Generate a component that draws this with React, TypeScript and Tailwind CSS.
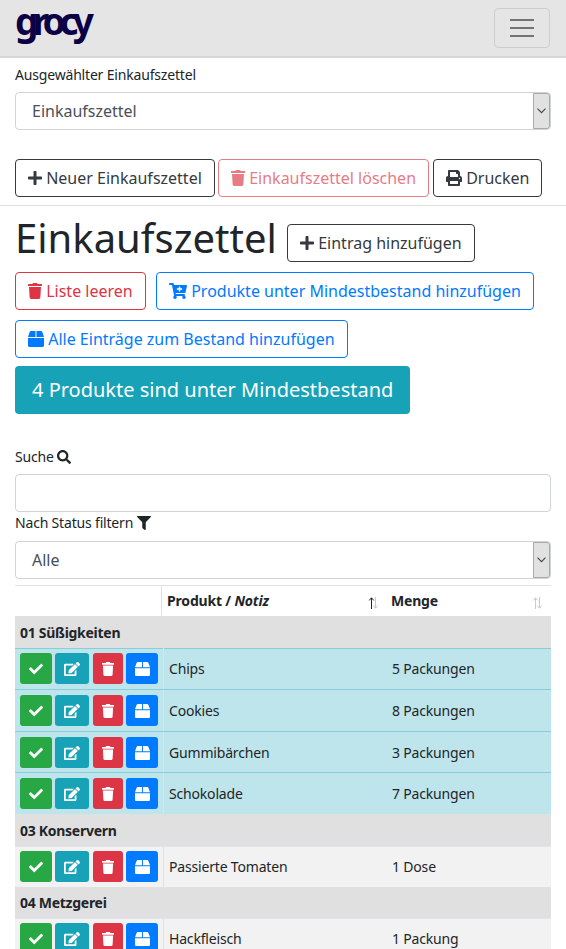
import type { ReactNode } from "react";
import type { IconType } from "react-icons";
import { FaBox, FaCartPlus, FaCheck, FaEdit, FaFilter, FaPlus, FaPrint, FaSearch, FaTrash } from "react-icons/fa";

function OutlineButton({ icon: Icon, iconClass, className, children }: { icon: IconType; iconClass: string; className: string; children: ReactNode }) {
  return (
    <button className={`flex h-[38px] shrink-0 items-center rounded border pl-3 text-base whitespace-nowrap ${className}`}>
      <Icon preserveAspectRatio="none" className={`mr-[4.2px] h-4 shrink-0 ${iconClass}`} />
      <span>{children}</span>
    </button>
  );
}

function SelectBox({ value }: { value: string }) {
  return (
    <div className="flex h-[38px] w-[536px] justify-between rounded border border-[#ced4da] bg-white text-base tracking-normal text-[#495057]">
      <span className="pl-4 leading-9">{value}</span>
      <span className="flex w-[17px] items-center justify-center rounded-r-[3px] border border-[#a9a9ad] bg-[#e1e1e1]">
        <svg width="9" height="6" viewBox="0 0 9 6" fill="none" stroke="#444" strokeWidth="1.1">
          <path d="M.5.7 4.5 4.7 8.5.7" />
        </svg>
      </span>
    </div>
  );
}

function SortArrows({ active }: { active?: boolean }) {
  return (
    <svg width="11" height="14" viewBox="0 0 11 14" fill="none" strokeWidth="1">
      <path d="M3.5 13V2M1.2 4.4 3.5 1.8 5.8 4.4" stroke={active ? "#212529" : "#c9cacb"} />
      <path d="M7.5 1V12M5.2 9.6 7.5 12.2 9.8 9.6" stroke="#c9cacb" />
    </svg>
  );
}

function Group({ name, height = "h-8 leading-[33px]" }: { name: string; height?: string }) {
  return <div className={`bg-[#e0e0e0] pl-[5px] font-bold tracking-[-0.28px] ${height}`}>{name}</div>;
}

function Row({ name, amount, height, low }: { name: string; amount: string; height: string; low?: boolean }) {
  const button = "flex h-[31px] items-center justify-center rounded-[3px]";
  return (
    <div className={`flex border-t ${height} ${low ? "border-[#86cfda] bg-[#bee5eb]" : "border-[#e2e4e8] bg-[#f2f2f2]"}`}>
      <div className="-mt-px flex w-[149px] border-r border-[#dee2e6] pt-[5px] pl-[5px] text-sm text-white">
        <span className={`${button} mr-[3px] w-8 bg-[#28a745]`}><FaCheck /></span>
        <span className={`${button} mr-1 w-[34px] bg-[#17a2b8]`}><FaEdit preserveAspectRatio="none" className="h-[14px] w-4" /></span>
        <span className={`${button} mr-[3px] w-[30px] bg-[#dc3545]`}><FaTrash preserveAspectRatio="none" className="h-[14px] w-3" /></span>
        <span className={`${button} w-8 bg-[#007bff]`}><FaBox preserveAspectRatio="none" className="h-[14px] w-[15px]" /></span>
      </div>
      <div className="w-[228px] pl-[5px] leading-10">{name}</div>
      <div className="leading-10">{amount}</div>
    </div>
  );
}

export default function App() {
  return (
    <div className="h-[949px] w-[566px] overflow-hidden bg-white font-['Noto_Sans',sans-serif] text-sm tracking-[-0.18px] text-[#212529]">
      <header className="flex h-[58px] items-start justify-between border-b-2 border-[#d6d6d6] bg-[#e5e5e5] pr-4 pl-[15px]">
        <div className="text-[37px] leading-[42px] font-bold tracking-[-5.9px] text-[#0b0045]">grocy</div>
        <button className="mt-2 flex h-10 w-14 flex-col items-center justify-center gap-[6px] rounded border border-[#cecece]">
          <span className="h-[2px] w-6 bg-[#737373]" />
          <span className="h-[2px] w-6 bg-[#737373]" />
          <span className="h-[2px] w-6 bg-[#737373]" />
        </button>
      </header>

      <section className="h-[148px] border-b border-[#dfdfdf] px-[15px]">
        <div className="h-[34px] leading-[34px]">Ausgewählter Einkaufszettel</div>
        <SelectBox value="Einkaufszettel" />
        <div className="mt-[29px] flex tracking-normal">
          <OutlineButton icon={FaPlus} iconClass="w-[14px]" className="mr-[3px] w-[200px] border-[#343a40] text-[#343a40]">Neuer Einkaufszettel</OutlineButton>
          <OutlineButton icon={FaTrash} iconClass="w-[14px]" className="mr-1 w-[211px] border-[#e77c87] text-[#e77c87]">Einkaufszettel löschen</OutlineButton>
          <OutlineButton icon={FaPrint} iconClass="w-4" className="w-[109px] border-[#343a40] text-[#343a40]">Drucken</OutlineButton>
        </div>
      </section>

      <main className="px-[15px]">
        <div className="flex h-[66px] tracking-normal">
          <h1 className="w-[272px] text-[40px] leading-[64px] whitespace-nowrap">Einkaufszettel</h1>
          <OutlineButton icon={FaPlus} iconClass="w-[14px]" className="mt-[18px] w-[188px] border-[#343a40] text-[#343a40]">Eintrag hinzufügen</OutlineButton>
        </div>
        <div className="flex gap-[10px] tracking-normal">
          <OutlineButton icon={FaTrash} iconClass="w-[14px]" className="w-[131px] border-[#dc3545] text-[#dc3545]">Liste leeren</OutlineButton>
          <OutlineButton icon={FaCartPlus} iconClass="w-[18px]" className="w-[378px] border-[#007bff] text-[#007bff]">Produkte unter Mindestbestand hinzufügen</OutlineButton>
        </div>
        <OutlineButton icon={FaBox} iconClass="w-4" className="mt-[10px] w-[333px] border-[#007bff] tracking-normal text-[#007bff]">Alle Einträge zum Bestand hinzufügen</OutlineButton>
        <div className="mt-2 h-12 w-[395px] rounded bg-[#17a2b8] pl-[17px] text-xl leading-[48px] tracking-normal whitespace-nowrap text-white">4 Produkte sind unter Mindestbestand</div>

        <div className="mt-[33px] flex h-[27px] gap-[3px] leading-5">Suche <FaSearch className="mt-[3px] h-[14px] w-[14px]" /></div>
        <input className="block h-[38px] w-[536px] rounded border border-[#ced4da]" />
        <div className="flex h-[29px] gap-1 pt-px leading-5">Nach Status filtern <FaFilter className="mt-[3px] h-[14px] w-[14px]" /></div>
        <SelectBox value="Alle" />

        <div className="mt-[6px] w-[536px]">
          <div className="flex h-[31px] border-t border-[#dee2e6] leading-[30px] font-bold">
            <div className="w-[147px] border-r border-[#dee2e6]" />
            <div className="flex w-[225px] items-center justify-between pr-2 pl-[5px]"><span>Produkt / <i>Notiz</i></span><span className="pt-1"><SortArrows active /></span></div>
            <div className="flex w-[164px] items-center justify-between pr-2 pl-1"><span>Menge</span><span className="pt-1"><SortArrows /></span></div>
          </div>
          <Group name="01 Süßigkeiten" />
          <Row name="Chips" amount="5 Packungen" height="h-[41px]" low />
          <Row name="Cookies" amount="8 Packungen" height="h-[42px] pt-px" low />
          <Row name="Gummibärchen" amount="3 Packungen" height="h-[41px] pt-px" low />
          <Row name="Schokolade" amount="7 Packungen" height="h-[42px] pt-px" low />
          <Group name="03 Konservern" />
          <Row name="Passierte Tomaten" amount="1 Dose" height="h-[41px]" />
          <Group name="04 Metzgerei" height="h-[31px] leading-[31px]" />
          <Row name="Hackfleisch" amount="1 Packung" height="h-[42px]" />
        </div>
      </main>
    </div>
  );
}
